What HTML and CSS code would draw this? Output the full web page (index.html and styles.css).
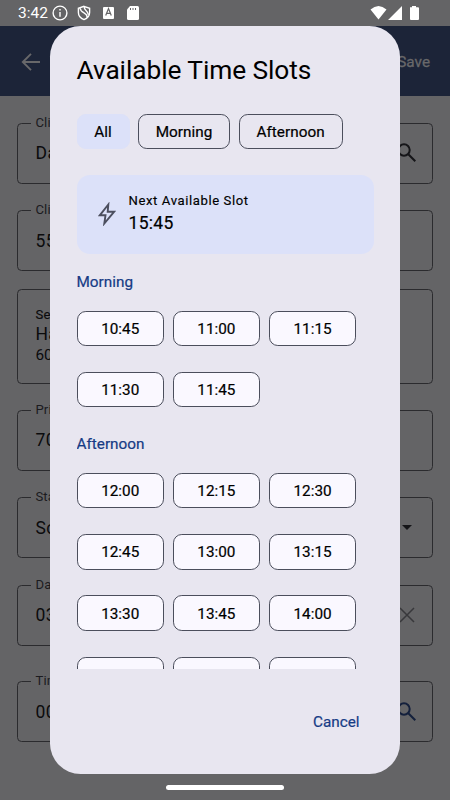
FILE: index.html
```html
<!DOCTYPE html>
<html lang="en">
<head>
<meta charset="utf-8">
<title>Available Time Slots</title>
<link rel="stylesheet" href="styles.css">
</head>
<body>
<div class="screen">
  <div class="status">
    <span class="clock">3:42</span>
    <svg class="left-icons" width="90" height="16" viewBox="0 0 90 16">
      <g fill="none" stroke="#fff" stroke-width="1.4">
        <circle cx="8" cy="8" r="6.9"/><path d="M8 7v4.700M8 4v1.600"/>
        <path d="M32 1.300l5.600 2v4.200c0 3.500-2.400 5.900-5.600 7.100-3.200-1.200-5.600-3.600-5.600-7.100V3.300zM28.300 3.500c.2 4.700 6.600 3.700 6.900 8.700M32.200 1.800c-.3 4.200 4.300 3.700 4 8"/>
      </g>
      <rect x="51" y="2" width="11" height="12" rx="1" fill="#fff"/>
      <path d="M53.700 10.500l2.800-7 2.800 7M54.700 8.300h3.600" fill="none" stroke="#646466" stroke-width="1.200"/>
      <path d="M78 1h7.500a1.500 1.500 0 0 1 1.500 1.500v11a1.500 1.500 0 0 1-1.500 1.500h-9a1.500 1.500 0 0 1-1.500-1.500V4.500z" fill="#fff"/>
      <path d="M78.500 3v2M81 3v2M83.500 3v2" stroke="#646466" stroke-width="1"/>
    </svg>
    <svg class="right-icons" width="50" height="16" viewBox="0 0 50 16" fill="#fff">
      <path d="M.5 4.500Q8.500-2.500 16.500 4.500L8.500 14.500zM32 1v14H18zM40 2.200h2V1h4v1.200h2a1 1 0 0 1 1 1V14a1 1 0 0 1-1 1h-7a1 1 0 0 1-1-1V3.200z"/>
    </svg>
  </div>
  <div class="appbar">
    <svg width="20" height="20" viewBox="0 0 20 20" fill="none" stroke="#68686a" stroke-width="1.900"><path d="M19 10H2M10 1.800L1.800 10l8.200 8.200"/></svg>
    <span>Save</span>
  </div>
  <div class="form">
    <div class="field"><label>Client</label><span>Da</span>
      <svg class="search" viewBox="0 0 20 20"><circle cx="7" cy="7" r="5.700"/><path d="M11.300 11.300l7 7"/></svg></div>
    <div class="field"><label>Client</label><span>55</span></div>
    <div class="service"><small>Service</small><span>Ha</span><em>60</em></div>
    <div class="field"><label>Price</label><span>70</span></div>
    <div class="field"><label>Status</label><span>Sc</span><i class="caret"></i></div>
    <div class="field"><label>Date</label><span>03</span>
      <svg class="clear" viewBox="0 0 16 16"><path d="M1 1l14 14M15 1L1 15"/></svg></div>
    <div class="field last"><label>Time</label><span>00</span>
      <svg class="search blue" viewBox="0 0 20 20"><circle cx="7" cy="7" r="5.700"/><path d="M11.300 11.300l7 7"/></svg></div>
  </div>
  <div class="dialog">
    <h1>Available Time Slots</h1>
    <div class="filters"><button class="on">All</button><button>Morning</button><button>Afternoon</button></div>
    <div class="slots">
      <div class="next">
        <svg width="18" height="24" viewBox="0 0 18 24" fill="none" stroke="#4c4f5f" stroke-width="1.900" stroke-linejoin="miter"><path d="M10.300 2.500L1.800 13.300h5.700L6.300 21.500 16.200 9.700h-6.500z"/></svg>
        <div><p>Next Available Slot</p><b>15:45</b></div>
      </div>
      <h2>Morning</h2>
      <div class="grid"><button>10:45</button><button>11:00</button><button>11:15</button><button>11:30</button><button>11:45</button></div>
      <h2>Afternoon</h2>
      <div class="grid"><button>12:00</button><button>12:15</button><button>12:30</button><button>12:45</button><button>13:00</button><button>13:15</button><button>13:30</button><button>13:45</button><button>14:00</button><button>15:45</button><button>16:00</button><button>16:15</button></div>
    </div>
    <div class="actions"><a>Cancel</a></div>
  </div>
  <div class="home"></div>
</div>
</body>
</html>
```
FILE: styles.css
```css
* { box-sizing: border-box; margin: 0; padding: 0; }
body { font-family: Roboto, sans-serif; background: #646466; color: #000; }
.screen { position: relative; width: 450px; height: 800px; overflow: hidden; background: #646466; }
.status { display: flex; align-items: center; height: 26px; padding: 0 30px 0 18px; color: #fff; }
.clock { font-size: 15.500px; width: 34px; white-space: nowrap; }
.right-icons { margin-left: auto; }
.appbar { display: flex; align-items: center; justify-content: space-between; height: 70px; padding: 1px 20px 0 21px; background: #1c2438; color: #68686a; font-size: 15.300px; -webkit-text-stroke: .3px; }
.form { display: flex; flex-direction: column; gap: 26.500px; padding: 26.500px 17.400px 0; }
.field { position: relative; display: flex; align-items: center; justify-content: space-between; height: 61px; padding: 0 17px; border: 1px solid #2b2b2e; border-radius: 4.500px; font-size: 17.500px; color: #0b0b0d; letter-spacing: .5px; }
.field label { position: absolute; left: 13px; top: -9px; padding: 0 4px; background: #646466; color: #1b1b1f; font-size: 13.100px; line-height: 16px; letter-spacing: .2px; }
.service { display: flex; flex-direction: column; height: 95px; margin: -8.600px 0 0; padding: 16.500px 17px; border: 1px solid #2b2b2e; border-radius: 4.500px; color: #0b0b0d; }
.service small { font-size: 13.100px; line-height: 17px; -webkit-text-stroke: .15px; letter-spacing: .3px; }
.service span { font-size: 17.500px; line-height: 22px; letter-spacing: .5px; }
.service em { font-size: 15.300px; line-height: 20px; font-style: normal; }
.service + .field { margin-top: -.6px; }
.last { margin-top: 9px; }
.search { width: 20px; height: 20px; margin-right: -2px; fill: none; stroke: #151518; stroke-width: 2; }
.blue { stroke: #14203c; }
.clear { width: 16px; height: 16px; fill: none; stroke: #38383b; stroke-width: 1.500; }
.caret { margin-right: 3px; border: 5.500px solid transparent; border-top-color: #151518; border-bottom: 0; }
.dialog { position: absolute; left: 50px; top: 26px; width: 350px; height: 748px; padding: 26px 26.500px 0; border-radius: 30.600px; background: #e8e6f0; }
h1 { height: 61.500px; font-size: 26.300px; font-weight: 400; line-height: 37px; letter-spacing: -.08px; white-space: nowrap; }
button { font-family: inherit; font-size: 15.300px; font-weight: 400; -webkit-text-stroke: .2px; letter-spacing: 0; color: #000; height: 35.500px; padding-top: 1px; border: 1px solid #4b4e5c; border-radius: 8.800px; background: none; }
.filters { display: flex; gap: 8.800px; height: 61.500px; }
.filters button { width: 91.500px; letter-spacing: .05px; }
.filters button:last-child { width: 104px; }
.filters .on { width: 53px; border-color: #dce1f9; background: #dce1f9; }
.slots { height: 494px; overflow: hidden; }
.next { display: flex; gap: 13px; height: 78.500px; padding: 17px 21px; border-radius: 13px; background: #dce1f9; }
.next svg { margin-top: 10px; }
.next p { font-size: 13.100px; line-height: 18px; -webkit-text-stroke: .15px; letter-spacing: .6px; }
.next b { display: block; font-size: 17.500px; line-height: 26px; font-weight: 400; -webkit-text-stroke: .2px; letter-spacing: .3px; }
h2 { font-size: 15.300px; font-weight: 400; -webkit-text-stroke: .2px; letter-spacing: 0; line-height: 22px; margin: 17.500px 0; height: 22px; color: #163b85; }
.grid { display: grid; grid-template-columns: repeat(3, 87.400px); gap: 25.800px 8.800px; }
.grid button { background: #faf8ff; }
.grid + h2 { margin-top: 26px; }
.actions { display: flex; justify-content: flex-end; padding: 42.500px 14px 0 0; font-size: 15.300px; line-height: 20px; -webkit-text-stroke: .2px; letter-spacing: 0; color: #163b85; }
.home { position: absolute; left: 166px; top: 784.500px; width: 118px; height: 5px; border-radius: 3px; background: #fff; }
```
